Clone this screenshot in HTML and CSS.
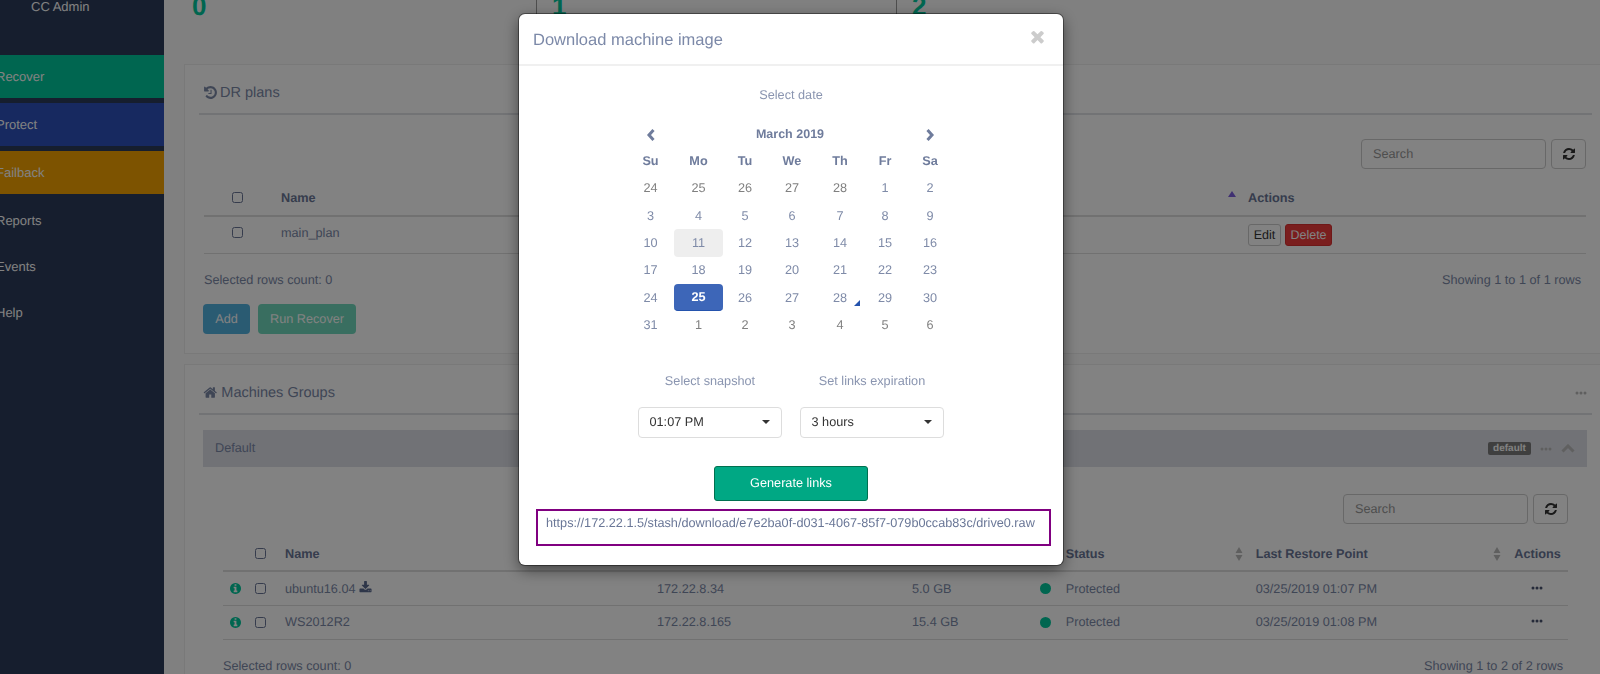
FILE: index.html
```html
<!DOCTYPE html>
<html lang="en">
<head>
<meta charset="utf-8">
<title>Download machine image</title>
<link rel="stylesheet" href="styles.css">
</head>
<body>
<svg class="sprite" xmlns="http://www.w3.org/2000/svg">
  <symbol id="i-refresh" viewBox="0 0 1792 1792"><path d="M1639 1056q0 5-1 7-64 268-268 434.500t-478 166.500q-146 0-282.500-55t-243.500-157l-129 129q-19 19-45 19t-45-19-19-45v-448q0-26 19-45t45-19h448q26 0 45 19t19 45-19 45l-137 137q71 66 161 102t187 36q134 0 250-65t186-179q11-17 53-117 8-23 30-23h192q13 0 22.500 9.500t9.500 22.500zm25-800v448q0 26-19 45t-45 19h-448q-26 0-45-19t-19-45 19-45l138-138q-148-137-349-137-134 0-250 65t-186 179q-11 17-53 117-8 23-30 23h-199q-13 0-22.500-9.500t-9.500-22.500v-7q65-268 270-434.500t480-166.500q146 0 284 55.500t245 156.500l130-129q19-19 45-19t45 19 19 45z"/></symbol>
  <symbol id="i-history" viewBox="0 0 1792 1792"><path d="M1664 896q0 156-61 298t-164 245-245 164-298 61q-172 0-327-72.500t-264-204.500q-7-10-6.500-22.500t8.500-20.500l137-138q10-9 25-9 16 2 23 12 73 95 179 147t225 52q104 0 198.500-40.500t163.500-109.500 109.500-163.500 40.500-198.500-40.500-198.500-109.500-163.500-163.500-109.500-198.500-40.500q-98 0-188 35.500t-160 101.500l137 138q31 30 14 69-17 40-59 40h-448q-26 0-45-19t-19-45v-448q0-42 40-59 39-17 69 14l130 129q107-101 244.500-156.500t284.500-55.500q156 0 298 61t245 164 164 245 61 298zm-640-288v448q0 14-9 23t-23 9h-320q-14 0-23-9t-9-23v-64q0-14 9-23t23-9h224v-352q0-14 9-23t23-9h64q14 0 23 9t9 23z"/></symbol>
  <symbol id="i-home" viewBox="0 0 1792 1792"><path d="M1472 992v480q0 26-19 45t-45 19h-384v-384h-256v384h-384q-26 0-45-19t-19-45v-480q0-1 .5-3t.5-3l575-474 575 474q1 2 1 6zm223-69l-62 74q-8 9-21 11h-3q-13 0-21-7l-692-577-692 577q-12 8-24 7-13-2-21-11l-62-74q-8-10-7-23.500t11-21.500l719-599q32-26 76-26t76 26l244 204v-195q0-14 9-23t23-9h192q14 0 23 9t9 23v408l219 182q10 8 11 21.500t-7 23.500z"/></symbol>
  <symbol id="i-info" viewBox="128 128 1536 1536"><path d="M1152 1376v-160q0-14-9-23t-23-9h-96v-512q0-14-9-23t-23-9h-320q-14 0-23 9t-9 23v160q0 14 9 23t23 9h96v320h-96q-14 0-23 9t-9 23v160q0 14 9 23t23 9h448q14 0 23-9t9-23zm-128-896v-160q0-14-9-23t-23-9h-192q-14 0-23 9t-9 23v160q0 14 9 23t23 9h192q14 0 23-9t9-23zm640 416q0 209-103 385.500t-279.500 279.500-385.500 103-385.500-103-279.500-279.500-103-385.500 103-385.500 279.500-279.500 385.500-103 385.500 103 279.500 279.500 103 385.500z"/></symbol>
  <symbol id="i-download" viewBox="0 0 1792 1792"><path d="M1344 1344q0-26-19-45t-45-19-45 19-19 45 19 45 45 19 45-19 19-45zm256 0q0-26-19-45t-45-19-45 19-19 45 19 45 45 19 45-19 19-45zm128-224v320q0 40-28 68t-68 28h-1472q-40 0-68-28t-28-68v-320q0-40 28-68t68-28h465l135 136q58 56 136 56t136-56l136-136h464q40 0 68 28t28 68zm-325-569q17 41-14 70l-448 448q-18 19-45 19t-45-19l-448-448q-31-29-14-70 17-39 59-39h256v-448q0-26 19-45t45-19h256q26 0 45 19t19 45v448h256q42 0 59 39z"/></symbol>
  <symbol id="i-times" viewBox="0 0 1408 1792"><path d="M1298 1322q0 40-28 68l-136 136q-28 28-68 28t-68-28l-294-294-294 294q-28 28-68 28t-68-28l-136-136q-28-28-28-68t28-68l294-294-294-294q-28-28-28-68t28-68l136-136q28-28 68-28t68 28l294 294 294-294q28-28 68-28t68 28l136 136q28 28 28 68t-28 68l-294 294 294 294q28 28 28 68z"/></symbol>
  <symbol id="i-dots" viewBox="0 0 12 4"><circle cx="2" cy="2" r="1.500"/><circle cx="6" cy="2" r="1.500"/><circle cx="10" cy="2" r="1.500"/></symbol>
  <symbol id="i-sort" viewBox="0 0 8 14"><path d="M4 0l3.500 6h-7zM4 14l3.500-6h-7z"/></symbol>
</svg>

<div class="app">
  <aside class="sidebar">
    <div class="brand">CC Admin</div>
    <nav class="nav">
      <a class="nav-item nav-recover">Recover</a>
      <a class="nav-item nav-protect">Protect</a>
      <a class="nav-item nav-failback">Failback</a>
      <a class="nav-plain nav-first">Reports</a>
      <a class="nav-plain">Events</a>
      <a class="nav-plain">Help</a>
    </nav>
  </aside>

  <main class="main">
    <div class="stats">
      <div class="stat stat-a">0</div>
      <div class="stat stat-b">1</div>
      <div class="stat stat-c">2</div>
    </div>

    <section class="card">
      <h2 class="card-title"><svg class="ico-title"><use href="#i-history"/></svg>DR plans</h2>
      <div class="plans">
        <div class="toolbar">
          <input class="search" placeholder="Search">
          <button class="refresh"><svg class="ico-refresh"><use href="#i-refresh"/></svg></button>
        </div>
        <div class="row-plan head">
          <span></span>
          <span class="box"></span>
          <span class="th-sort">Name<i class="sort-up"></i></span>
          <span>Actions</span>
        </div>
        <div class="row-plan body-row">
          <span></span>
          <span class="box raised"></span>
          <span class="raised">main_plan</span>
          <span class="actions"><button class="btn-edit">Edit</button><button class="btn-delete">Delete</button></span>
        </div>
        <div class="tfoot"><span>Selected rows count: 0</span><span>Showing 1 to 1 of 1 rows</span></div>
        <div class="plan-btns"><button class="btn-add">Add</button><button class="btn-run">Run Recover</button></div>
      </div>
    </section>

    <section class="card card-second">
      <div class="card-title card-title-row">
        <h2 class="title-inner"><svg class="ico-title ico-home"><use href="#i-home"/></svg>Machines Groups</h2>
        <svg class="ico-dots dots-light"><use href="#i-dots"/></svg>
      </div>
      <div class="group-bar">
        <span class="group-name">Default</span>
        <span class="group-right">
          <span class="badge">default</span>
          <svg class="ico-dots dots-light"><use href="#i-dots"/></svg>
          <svg class="chev-up" viewBox="0 0 14 9"><path d="M1.500 7.500L7 2l5.500 5.500"/></svg>
        </span>
      </div>
      <div class="machines">
        <div class="toolbar toolbar-m">
          <input class="search" placeholder="Search">
          <button class="refresh"><svg class="ico-refresh"><use href="#i-refresh"/></svg></button>
        </div>
        <div class="row-m head">
          <span></span>
          <span class="box"></span>
          <span>Name</span>
          <span>IP</span>
          <span>Size</span>
          <span></span>
          <span class="th-sort">Status<svg class="ico-sort"><use href="#i-sort"/></svg></span>
          <span class="th-sort">Last Restore Point<svg class="ico-sort"><use href="#i-sort"/></svg></span>
          <span>Actions</span>
        </div>
        <div class="row-m">
          <svg class="ico-info"><use href="#i-info"/></svg>
          <span class="box"></span>
          <span>ubuntu16.04 <svg class="ico-dl"><use href="#i-download"/></svg></span>
          <span>172.22.8.34</span>
          <span>5.0 GB</span>
          <span class="dot"></span>
          <span>Protected</span>
          <span>03/25/2019 01:07 PM</span>
          <svg class="ico-dots dots-dark"><use href="#i-dots"/></svg>
        </div>
        <div class="row-m">
          <svg class="ico-info"><use href="#i-info"/></svg>
          <span class="box"></span>
          <span>WS2012R2</span>
          <span>172.22.8.165</span>
          <span>15.4 GB</span>
          <span class="dot"></span>
          <span>Protected</span>
          <span>03/25/2019 01:08 PM</span>
          <svg class="ico-dots dots-dark"><use href="#i-dots"/></svg>
        </div>
        <div class="tfoot tfoot-m"><span>Selected rows count: 0</span><span>Showing 1 to 2 of 2 rows</span></div>
      </div>
    </section>
  </main>
</div>

<div class="overlay">
  <div class="modal">
    <header class="modal-head">
      <h3 class="modal-title">Download machine image</h3>
      <svg class="modal-close"><use href="#i-times"/></svg>
    </header>
    <div class="label label-date">Select date</div>
    <div class="calendar">
      <span class="cal-nav"><svg class="chev" viewBox="0 0 10 14"><path d="M7.500 2L3 7l4.500 5"/></svg></span>
      <span class="cal-month">March 2019</span>
      <span class="cal-nav"><svg class="chev" viewBox="0 0 10 14"><path d="M2.500 2L7 7l-4.500 5"/></svg></span>
      <b>Su</b><b>Mo</b><b>Tu</b><b>We</b><b>Th</b><b>Fr</b><b>Sa</b>
      <span class="old">24</span><span class="old">25</span><span class="old">26</span><span class="old">27</span><span class="old">28</span><span>1</span><span>2</span>
      <span>3</span><span>4</span><span>5</span><span>6</span><span>7</span><span>8</span><span>9</span>
      <span>10</span><span class="today">11</span><span>12</span><span>13</span><span>14</span><span>15</span><span>16</span>
      <span>17</span><span>18</span><span>19</span><span>20</span><span>21</span><span>22</span><span>23</span>
      <span>24</span><span class="active">25</span><span>26</span><span>27</span><span class="marked">28</span><span>29</span><span>30</span>
      <span>31</span><span class="old">1</span><span class="old">2</span><span class="old">3</span><span class="old">4</span><span class="old">5</span><span class="old">6</span>
    </div>
    <div class="pickers">
      <div class="picker">
        <div class="label">Select snapshot</div>
        <div class="select"><span>01:07 PM</span><i class="caret"></i></div>
      </div>
      <div class="picker">
        <div class="label">Set links expiration</div>
        <div class="select"><span>3 hours</span><i class="caret"></i></div>
      </div>
    </div>
    <button class="btn-generate">Generate links</button>
    <div class="link-box">https://172.22.1.5/stash/download/e7e2ba0f-d031-4067-85f7-079b0ccab83c/drive0.raw</div>
  </div>
</div>
</body>
</html>
```
FILE: styles.css
```css
* { box-sizing: border-box; }
html, body { margin: 0; height: 100%; overflow: hidden; }
body { font-family: "Liberation Sans", Arial, sans-serif; font-size: 13px; color: #7c89a8; background: #fbfbfb; text-rendering: geometricPrecision; }
button, input { font-family: inherit; font-size: 12.7px; text-rendering: geometricPrecision; }
h2, h3 { margin: 0; font-weight: 400; }
.sprite { width: 0; height: 0; overflow: hidden; display: block; }
svg { fill: currentColor; }

.app { display: flex; height: 674px; overflow: hidden; }

/* sidebar */
.sidebar { flex: 0 0 164px; background: #2b3b5a; color: #fff; }
.brand { height: 54.5px; padding-left: 31px; line-height: 13px; }
.nav { display: flex; flex-direction: column; }
.nav-item { display: flex; align-items: center; height: 43px; margin-bottom: 5.3px; padding-top: 1px; text-indent: -4px; }
.nav-recover { background: #00c99d; }
.nav-protect { background: #2d52bd; }
.nav-failback { background: #f5a300; margin-bottom: 0; padding-top: 0; }
.nav-plain { display: flex; align-items: center; height: 46.3px; text-indent: -4px; }
.nav-first { margin-top: 3px; }

/* main */
.main { flex: 1; min-width: 0; padding-left: 20px; font-size: 12.7px; }
.stats { display: flex; height: 73px; margin-top: -9px; font-size: 26px; font-weight: 700; line-height: 30px; color: #00c99d; }
.stat { height: 60px; padding-left: 15px; border-left: 1px solid #999; }
.stat-a { width: 352px; padding-left: 8px; border-left: 0; }
.stat-b { width: 360px; }

.card { height: 290px; background: #fff; border-top: 1px solid #eee; border-left: 1px solid #eee; border-bottom: 1px solid #eee; padding: 0 8px 0 14px; }
.card-second { height: 320px; margin-top: 10px; }
.card-title { display: flex; align-items: center; height: 50px; padding: 7px 0 0 4px; font-size: 14.5px; color: #7c89a8; border-bottom: 2px solid #dfe1e6; }
.card-title-row { justify-content: space-between; padding-right: 5px; }
.title-inner { display: flex; align-items: center; font-size: 14.5px; }
.ico-title { width: 15px; height: 15px; margin-right: 2px; }
.ico-home { width: 14.5px; margin-right: 3.8px; }

.plans { margin: 0 6px 0 5px; }
.toolbar { display: flex; justify-content: flex-end; gap: 5px; margin-top: 23.5px; }
.toolbar-m { margin-top: 27px; }
.search { width: 185px; height: 30px; padding: 0 11px; background: #fff; border: 1px solid #ccc; border-radius: 4px; color: #888; }
.search::placeholder { color: #999; opacity: 1; }
.refresh { display: flex; align-items: center; justify-content: center; width: 35px; height: 30px; padding: 0; background: #fff; border: 1px solid #ccc; border-radius: 4px; color: #333; }
.ico-refresh { width: 14px; height: 14px; }

.row-plan { display: grid; grid-template-columns: 27.5px 49.5px 967px 1fr; align-items: center; height: 37.3px; border-bottom: 1px solid #ddd; }
.row-plan.head { height: 48.5px; padding-top: 12px; border-bottom-width: 2px; }
.raised { margin-bottom: 5px; }
.head { font-weight: 700; color: #6a7797; }
.box { display: block; width: 11px; height: 11px; border: 1.5px solid #6a7797; border-radius: 2.5px; }
.th-sort { display: flex; align-items: center; justify-content: space-between; padding-right: 13px; }
.sort-up { margin-top: -8px; margin-right: -1px; border: 4px solid transparent; border-top: 0; border-bottom: 6px solid #7f5fe0; }
.actions { display: flex; gap: 4px; }
.btn-edit { height: 22px; width: 33px; padding: 0; background: #fff; border: 1px solid #ccc; border-radius: 3px; color: #333; font-size: 12.5px; }
.btn-delete { height: 22px; width: 47px; padding: 0; background: #f03c3c; border: 1px solid #d83030; border-radius: 3px; color: #fff; font-size: 12.5px; }
.tfoot { display: flex; align-items: center; justify-content: space-between; height: 49px; padding: 2px 5px 0 0; color: #7c89a8; }
.plan-btns { display: flex; gap: 8px; margin: 1px 0 0 -1px; }
.btn-add, .btn-run { height: 30px; padding: 0; border-radius: 4px; border: 0; color: #fff; }
.btn-add { width: 47px; background: #54b2e0; }
.btn-run { width: 98px; background: #70d8bc; }

.group-bar { display: flex; align-items: center; justify-content: space-between; height: 37.4px; margin: 15px 5px 0 4px; padding: 0 12px; background: #dee0e8; color: #7c89a8; }
.group-name { margin-bottom: 2px; }
.group-right { display: flex; align-items: center; }
.badge { display: flex; align-items: center; justify-content: center; width: 43px; height: 13.5px; margin-right: 9px; border-radius: 2px; background: #7c7c7c; color: #fff; font-size: 10px; font-weight: 700; }
.ico-dots { width: 12px; height: 4px; }
.dots-light { color: #bbb; }
.dots-dark { color: #4a5470; margin: -2px 0 0 17px; }
.chev-up { width: 14px; height: 9px; margin-left: 9px; fill: none; stroke: #bcbcbc; stroke-width: 3; }

.machines { margin: 0 24px; }
.row-m { display: grid; grid-template-columns: 32px 30px 372px 255px 128px 25.7px 190px 258.6px 1fr; align-items: center; height: 33.7px; border-bottom: 1px solid #ddd; }
.row-m.head { height: 48px; padding-top: 13px; border-bottom-width: 2px; }
.ico-sort { width: 8px; height: 14px; color: #bbb; }
.ico-info { width: 11px; height: 11px; margin-left: 6.5px; color: #00c99d; }
.ico-dl { width: 13px; height: 13px; color: #5a6a90; vertical-align: -1px; }
.dot { display: block; width: 11px; height: 11px; border-radius: 50%; background: #00c99d; }
.tfoot-m { height: 50px; }

/* modal */
.overlay { position: fixed; inset: 0; padding: 14px 0 0 519px; background: rgba(0, 0, 0, .49); }
.modal { width: 544px; height: 551px; padding-bottom: 18px; background: #fff; border-radius: 6px; box-shadow: 0 0 0 1px rgba(0, 0, 0, .4), 0 5px 15px rgba(0, 0, 0, .5); text-align: center; font-size: 12.7px; }
.modal-head { position: relative; display: flex; align-items: center; height: 52px; padding: 2px 14px 0; border-bottom: 2px solid #f0f0f0; }
.modal-title { font-size: 16.5px; color: #7c89a8; }
.modal-close { position: absolute; right: 17px; top: 13px; width: 17px; height: 19px; color: #ccc; }
.label { height: 18px; line-height: 18px; color: #8a95b0; }
.label-date { margin-top: 20px; }
.calendar { display: grid; grid-template-columns: 47px 49px 44px 50px 46px 44px 46px; grid-auto-rows: 27.33px; width: 326px; margin: 16px 0 0 108px; color: #7f8ba8; }
.calendar > * { position: relative; display: flex; align-items: center; justify-content: center; }
.calendar b { color: #6f7c9c; }
.cal-month { grid-column: 2 / 7; font-weight: 700; font-size: 12.5px; color: #6f7c9c; padding-right: 1px; }
.cal-nav { padding-top: 2px; }
.chev { width: 10px; height: 14px; fill: none; stroke: #6f7c9c; stroke-width: 3; }
.old { color: #808080; }
.today { background: #eee; border-radius: 4px; }
.active { background: #3d66b8; border-bottom: 1px solid #2453ad; border-radius: 4px; color: #fff; font-weight: 700; }
.marked::after { content: ""; position: absolute; right: 3px; bottom: 5px; border-style: solid; border-width: 0 0 6px 6px; border-color: transparent transparent #2453ad; }
.pickers { display: flex; justify-content: center; gap: 18px; margin-top: 33px; }
.picker { width: 144px; }
.select { display: flex; align-items: center; justify-content: space-between; height: 31px; margin-top: 17px; padding: 0 11px 0 10.5px; border: 1px solid #ddd; border-radius: 4px; color: #333; }
.caret { border: 4px solid transparent; border-top: 4px solid #333; border-bottom: 0; }
.btn-generate { display: block; width: 154px; height: 35.5px; margin: 28px auto 0; padding: 0; background: #00a884; border: 1px solid #00704f; border-radius: 3px; color: #fff; }
.link-box { width: 515px; height: 37px; margin: 8px 0 0 17px; padding: 5px 8px; border: 2px solid #800080; line-height: 15px; text-align: left; white-space: nowrap; color: #6a7797; }
```
